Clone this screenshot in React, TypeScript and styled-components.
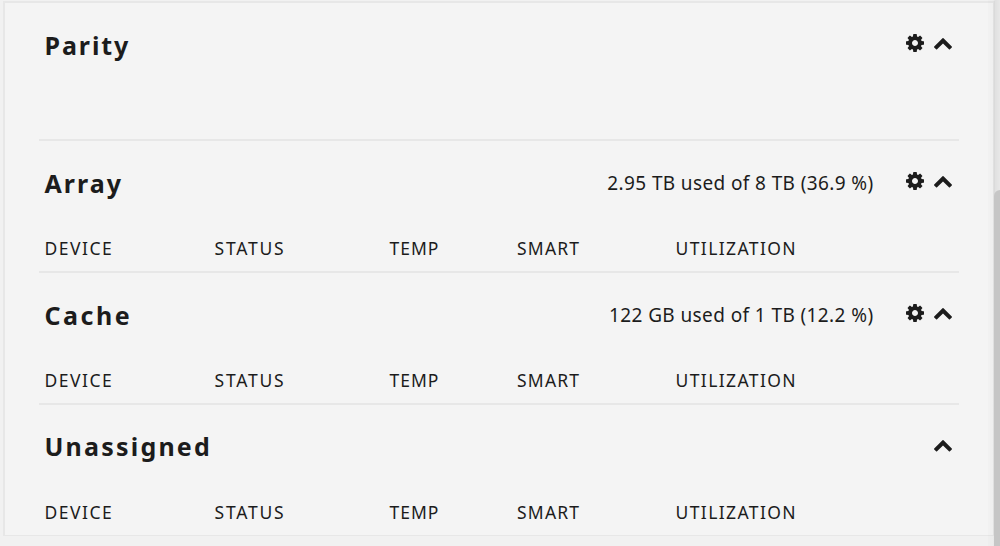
import styled, { createGlobalStyle } from 'styled-components'

const GlobalStyle = createGlobalStyle`
  body {
    margin: 0;
    overflow: hidden;
    background: #f1f1f1;
    color: #1c1c1c;
    font-family: 'Noto Sans', 'Open Sans', sans-serif;
  }
`
const Page = styled.div`
  position: relative;
  box-sizing: border-box;
  width: 1000px;
  height: 546px;
  padding: 1px 5px 0 3px;
`
const Panel = styled.div`
  box-sizing: border-box;
  height: 535px;
  padding: 0 34px;
  border: 2px solid #e7e7e7;
  border-bottom-width: 1px;
  background: #f4f4f4;
`
const Section = styled.section<{ $height: number }>`
  box-sizing: border-box;
  height: ${p => p.$height}px;
  padding: 0 6px 0 5.5px;
  border-bottom: 2px solid #e7e7e7;

  &:last-child {
    border-bottom: 0;
  }
`
const Header = styled.div`
  height: 80px;
  display: flex;
  flex-flow: row nowrap;
  align-items: center;
`
const Title = styled.h2<{ $spacing: number }>`
  margin: 0;
  padding-top: 3px;
  flex-grow: 1;
  font-size: 25px;
  line-height: 34px;
  font-weight: 700;
  letter-spacing: ${p => p.$spacing}px;
`
const Usage = styled.div<{ $spacing: number }>`
  padding: 3px 32px 0 0;
  font-size: 19px;
  line-height: 26px;
  white-space: nowrap;
  letter-spacing: ${p => p.$spacing}px;
`
const Controls = styled.div`
  display: flex;
  flex-flow: row nowrap;
  align-items: center;
  gap: 10px;
  padding-right: 1.5px;
`
const Icon = styled.svg`
  display: block;
  width: 18px;
  height: 18px;
  fill: #1c1c1c;
`
const Columns = styled.div`
  display: grid;
  grid-template-columns: 170px 175px 127.5px 158.5px 1fr;
  padding-top: 15px;
  font-size: 17.5px;
  line-height: 24px;
`
const Column = styled.div<{ $spacing: number }>`
  letter-spacing: ${p => p.$spacing}px;
`
const ScrollTrack = styled.div`
  position: absolute;
  top: 0;
  right: 0;
  width: 12px;
  height: 546px;
  background: linear-gradient(90deg, rgba(0, 0, 0, 0.01) 0, rgba(0, 0, 0, 0.02) 5px, rgba(0, 0, 0, 0.07) 7px, rgba(0, 0, 0, 0.04) 12px);
`
const ScrollThumb = styled.div`
  position: absolute;
  top: 190px;
  right: 0;
  bottom: 0;
  width: 6px;
  border-top-left-radius: 6px;
  background: #c6c6c6;
`

const CogIcon = () => (
  <Icon viewBox="0 128 1536 1536">
    <path d="M1024 896q0-106-75-181t-181-75-181 75-75 181 75 181 181 75 181-75 75-181zm512-109v222q0 12-8 23t-20 13l-185 28q-19 54-39 91 35 50 107 138 10 12 10 25t-9 23q-27 37-99 108t-94 71q-12 0-26-9l-138-108q-44 23-91 38-16 136-29 186-7 28-36 28h-222q-14 0-24.5-8.5t-11.5-21.5l-28-184q-49-16-90-37l-141 107q-10 9-25 9-14 0-25-11-126-114-165-168-7-10-7-23 0-12 8-23 15-21 51-66.5t54-70.5q-27-50-41-99l-183-27q-13-2-21-12.5t-8-23.5v-222q0-12 8-23t19-13l186-28q14-46 39-92-40-57-107-138-10-12-10-24 0-10 9-23 26-36 98.5-107.5t94.5-71.5q13 0 26 10l138 107q44-23 91-38 16-136 29-186 7-28 36-28h222q14 0 24.5 8.5t11.5 21.5l28 184q49 16 90 37l142-107q9-9 24-9 13 0 25 10 129 119 165 170 7 8 7 22 0 12-8 23-15 21-51 66.5t-54 70.5q26 50 41 98l183 28q13 2 21 12.5t8 23.5z" />
  </Icon>
)

const ChevronIcon = () => (
  <Icon viewBox="90 125 1612 1612">
    <path d="M1683 1331l-166 165q-19 19-45 19t-45-19l-531-531-531 531q-19 19-45 19t-45-19l-166-165q-19-19-19-45.5t19-45.5l742-741q19-19 45-19t45 19l742 741q19 19 19 45.5t-19 45.5z" />
  </Icon>
)

const columns = [
  { label: 'DEVICE', spacing: 1.5 },
  { label: 'STATUS', spacing: 1.8 },
  { label: 'TEMP', spacing: 1.0 },
  { label: 'SMART', spacing: 1.2 },
  { label: 'UTILIZATION', spacing: 1.4 },
]

const sections = [
  { title: 'Parity', spacing: 1.9, height: 138, cog: true, table: false },
  { title: 'Array', spacing: 2, height: 132, cog: true, table: true, usage: '2.95 TB used of 8 TB (36.9 %)', usageSpacing: 0.38 },
  { title: 'Cache', spacing: 2.5, height: 131.5, cog: true, table: true, usage: '122 GB used of 1 TB (12.2 %)', usageSpacing: 0.4 },
  { title: 'Unassigned', spacing: 2.2, height: 130, cog: false, table: true },
]

export default () => (
  <>
    <GlobalStyle />
    <Page>
      <Panel>
        {sections.map(s => (
          <Section key={s.title} $height={s.height}>
            <Header>
              <Title $spacing={s.spacing}>{s.title}</Title>
              {s.usage && <Usage $spacing={s.usageSpacing}>{s.usage}</Usage>}
              <Controls>
                {s.cog && <CogIcon />}
                <ChevronIcon />
              </Controls>
            </Header>
            {s.table && (
              <Columns>
                {columns.map(c => (
                  <Column key={c.label} $spacing={c.spacing}>{c.label}</Column>
                ))}
              </Columns>
            )}
          </Section>
        ))}
      </Panel>
      <ScrollTrack />
      <ScrollThumb />
    </Page>
  </>
)
